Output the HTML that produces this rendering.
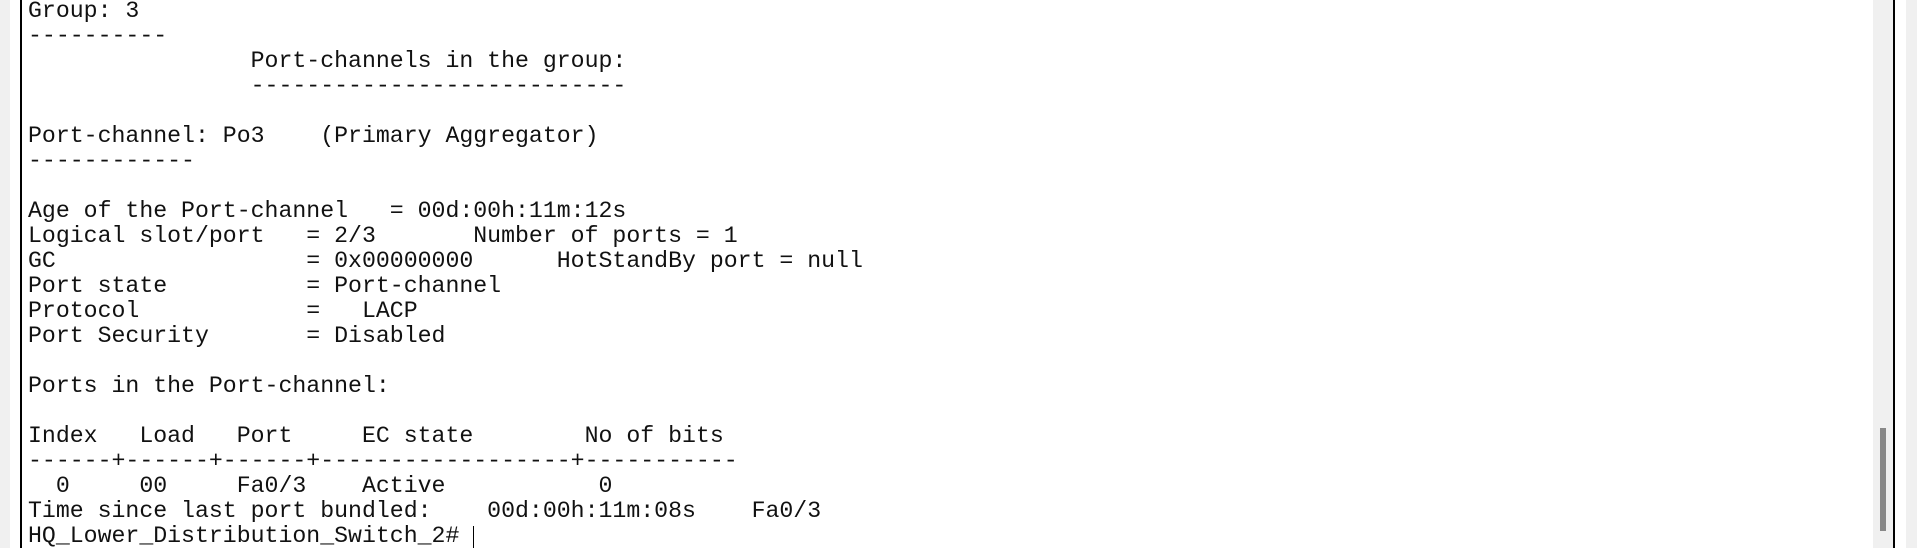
<!DOCTYPE html>
<html><head><meta charset="utf-8"><style>
html,body{margin:0;padding:0;width:1917px;height:548px;overflow:hidden;background:#fff;position:relative}
.g{position:absolute;top:0;height:548px;background:#f0f0f0}
.b{position:absolute;top:0;height:548px;width:2px;background:#000}
pre{position:absolute;left:28px;top:-1px;margin:0;font-family:"Liberation Mono","Courier New",monospace;font-size:23.2px;line-height:25px;color:#111;white-space:pre}
</style></head><body>
<div class="g" style="left:0;width:10px"></div>
<div class="b" style="left:20px"></div>
<div class="g" style="left:1873px;width:20px"></div>
<div style="position:absolute;left:1880px;top:428px;width:6px;height:103px;background:#888"></div>
<div class="b" style="left:1893px"></div>
<div class="g" style="left:1906px;width:11px"></div>
<pre>Group: 3
----------
                Port-channels in the group:
                ---------------------------

Port-channel: Po3    (Primary Aggregator)
------------

Age of the Port-channel   = 00d:00h:11m:12s
Logical slot/port   = 2/3       Number of ports = 1
GC                  = 0x00000000      HotStandBy port = null
Port state          = Port-channel
Protocol            =   LACP
Port Security       = Disabled

Ports in the Port-channel:

Index   Load   Port     EC state        No of bits
------+------+------+------------------+-----------
  0     00     Fa0/3    Active           0
Time since last port bundled:    00d:00h:11m:08s    Fa0/3
HQ_Lower_Distribution_Switch_2# </pre>
<div style="position:absolute;left:473px;top:526px;width:1px;height:22px;background:#000"></div>
</body></html>
